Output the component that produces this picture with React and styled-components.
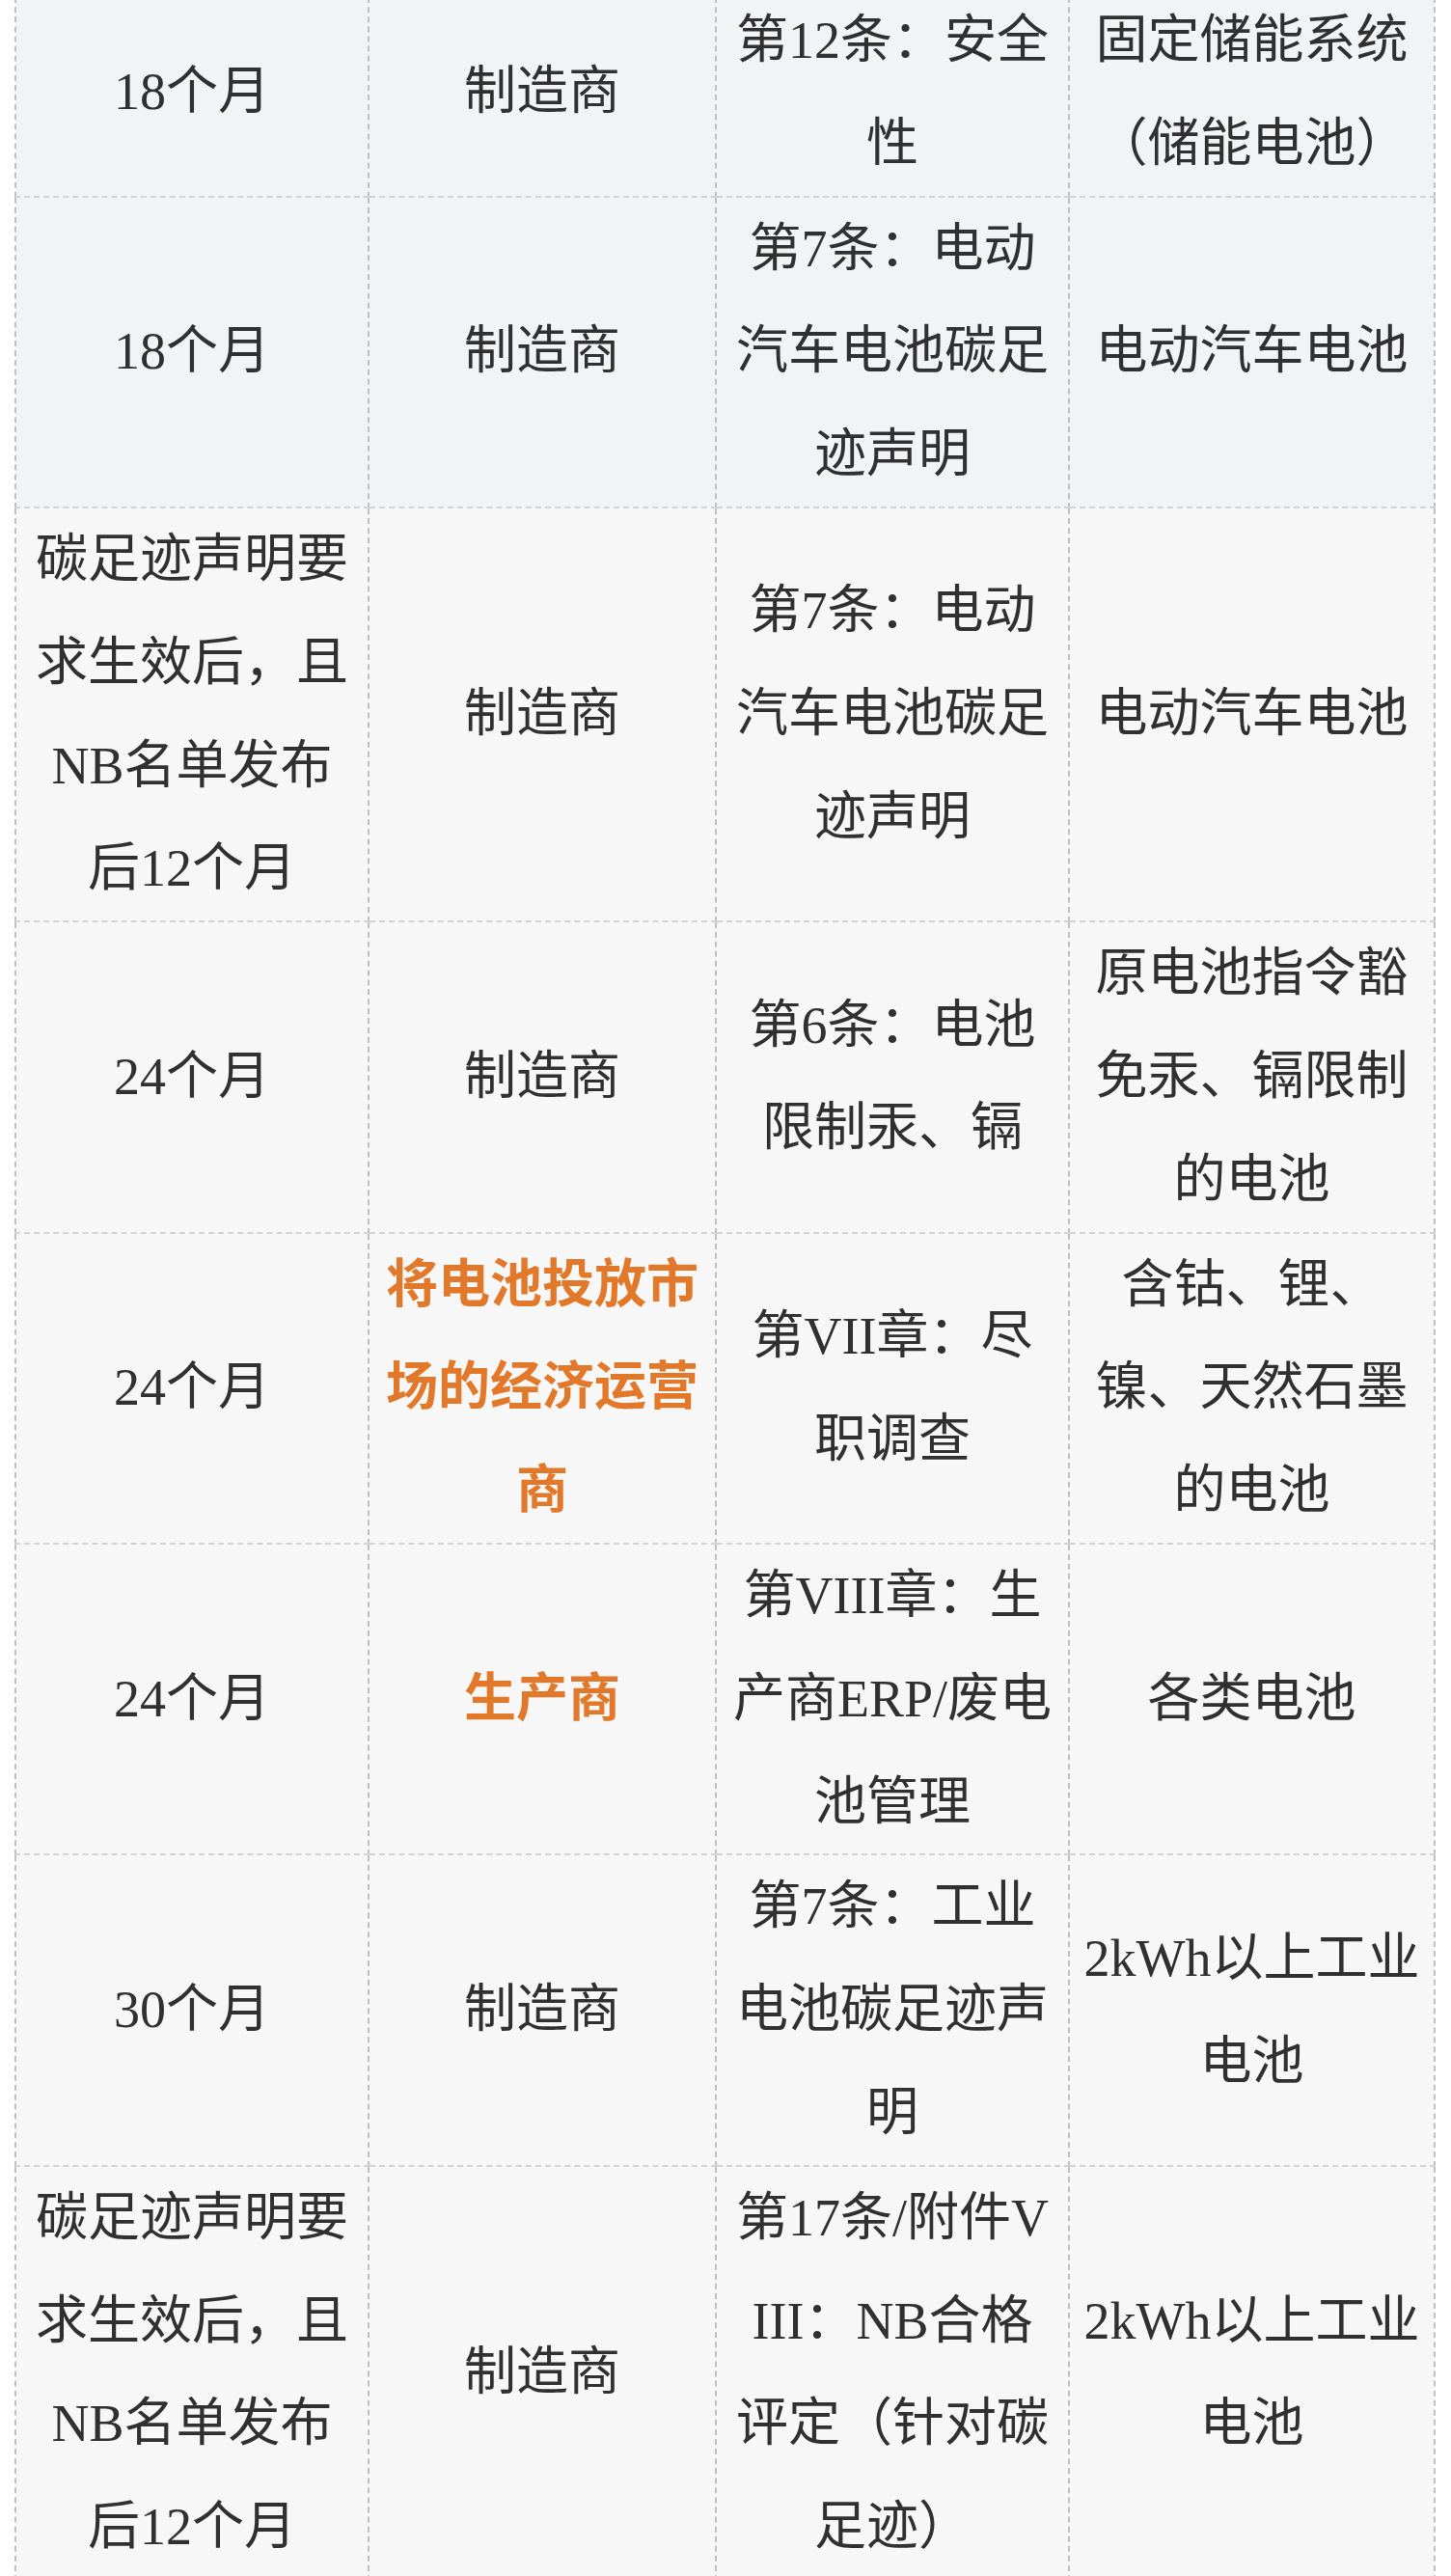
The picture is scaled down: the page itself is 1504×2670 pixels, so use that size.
import React from "react";
import styled, { createGlobalStyle } from "styled-components";

const GlobalStyle = createGlobalStyle`
  html, body {
    margin: 0;
    padding: 0;
    background: #ffffff;
  }
  body {
    font-family: "Liberation Serif", "Noto Sans CJK SC", serif;
  }
`;

const Page = styled.div`
  width: 1504px;
  height: 2670px;
  padding: 0 15px;
  box-sizing: border-box;
  overflow: hidden;
`;

const Table = styled.table`
  width: 1473px;
  margin-top: -13px;
  border-collapse: collapse;
  table-layout: fixed;
  font-family: "Liberation Serif", "Noto Sans CJK SC", serif;
  font-size: 54px;
  line-height: 106.8px;
  color: #303030;
  word-break: break-all;
`;

const Row = styled.tr`
  background: ${(p) => (p.$shade ? "#f2f3f5" : "#f7f7f7")};
`;

const Cell = styled.td`
  padding: 0 12px;
  text-align: center;
  vertical-align: middle;
  border-top: 2px dashed #d3d3d3;
  border-bottom: 2px dashed #d3d3d3;
  border-left: 2px dashed #c0c0c0;
  border-right: 2px dashed #c0c0c0;
`;

const Highlight = styled.strong`
  color: #e2792a;
  font-weight: 700;
`;

const rows = [
  { shade: true, cells: ["18个月", "制造商", "第12条：安全性", "固定储能系统（储能电池）"] },
  { shade: true, cells: ["18个月", "制造商", "第7条：电动汽车电池碳足迹声明", "电动汽车电池"] },
  { cells: ["碳足迹声明要求生效后，且NB名单发布后12个月", "制造商", "第7条：电动汽车电池碳足迹声明", "电动汽车电池"] },
  { cells: ["24个月", "制造商", "第6条：电池限制汞、镉", "原电池指令豁免汞、镉限制的电池"] },
  { cells: ["24个月", { hl: "将电池投放市场的经济运营商" }, "第VII章：尽职调查", "含钴、锂、镍、天然石墨的电池"] },
  { cells: ["24个月", { hl: "生产商" }, "第VIII章：生产商ERP/废电池管理", "各类电池"] },
  { cells: ["30个月", "制造商", "第7条：工业电池碳足迹声明", "2kWh以上工业电池"] },
  { cells: ["碳足迹声明要求生效后，且NB名单发布后12个月", "制造商", "第17条/附件VIII：NB合格评定（针对碳足迹）", "2kWh以上工业电池"] },
];

const colWidths = [366, 360, 366, 379];

export default function App() {
  return (
    <>
      <GlobalStyle />
      <Page>
        <Table>
          <colgroup>
            {colWidths.map((w, i) => (
              <col key={i} style={{ width: w }} />
            ))}
          </colgroup>
          <tbody>
            {rows.map((r, i) => (
              <Row key={i} $shade={r.shade}>
                {r.cells.map((c, j) => (
                  <Cell key={j}>
                    {typeof c === "string" ? c : <Highlight>{c.hl}</Highlight>}
                  </Cell>
                ))}
              </Row>
            ))}
          </tbody>
        </Table>
      </Page>
    </>
  );
}
